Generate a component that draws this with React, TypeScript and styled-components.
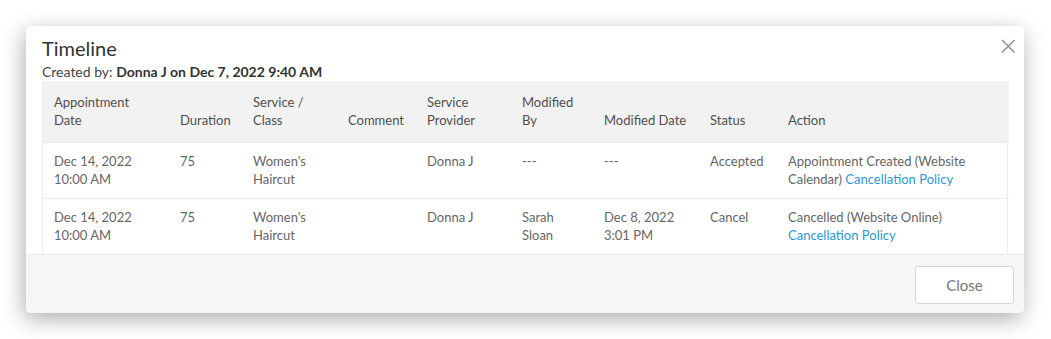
import styled, { createGlobalStyle } from "styled-components";

const GlobalStyle = createGlobalStyle`
  body {
    margin: 0;
    background: #ffffff;
    font-family: Lato, "Open Sans", Arial, sans-serif;
  }
`;

const StyledPage = styled.div`
  padding: 26px 27px 26px 26px;
`;

const StyledModal = styled.div`
  position: relative;
  width: 998px;
  background: #ffffff;
  border-radius: 5px;
  box-shadow: -2px 6px 22px rgba(0, 0, 0, 0.32);
  overflow: hidden;
`;

const StyledHeader = styled.div`
  padding: 10px 16px 0 16px;
`;

const StyledTitle = styled.h4`
  margin: 0;
  font-size: 20px;
  line-height: 24px;
  font-weight: 400;
  color: #333333;
`;

const StyledCreated = styled.div`
  font-size: 14px;
  line-height: 18px;
  color: #444444;
  margin-top: 3px;

  b {
    font-weight: 700;
    color: #333333;
  }
`;

const StyledCloseX = styled.button`
  position: absolute;
  top: 12px;
  right: 8px;
  width: 16px;
  height: 16px;
  padding: 0;
  border: none;
  background: transparent;
  cursor: pointer;
`;

const StyledTableWrap = styled.div`
  margin: 0 16px;
  border-left: 1px solid #ececec;
  border-right: 1px solid #ececec;
`;

const StyledTable = styled.table`
  width: 100%;
  border-collapse: collapse;
  table-layout: fixed;
  font-size: 13px;
  line-height: 18px;
`;

const StyledTh = styled.th`
  text-align: left;
  vertical-align: bottom;
  font-weight: 400;
  color: #4f4f4f;
  background: #f2f2f2;
  padding: 12px 10px 13px 11px;
`;

const StyledTd = styled.td`
  vertical-align: top;
  color: #666666;
  padding: 9px 10px 10px 11px;
  border-top: 1px solid #ececec;
`;

const StyledLink = styled.a`
  color: #2d97d6;
  text-decoration: none;
  cursor: pointer;
`;

const StyledFooter = styled.div`
  display: flex;
  justify-content: flex-end;
  background: #f6f6f6;
  border-top: 1px solid #ececec;
  padding: 11px 10px 9px 16px;
`;

const StyledButton = styled.button`
  width: 99px;
  height: 38px;
  background: #ffffff;
  border: 1px solid #d6d6d6;
  border-radius: 3px;
  font-family: inherit;
  font-size: 15px;
  color: #777777;
  cursor: pointer;
`;

const columns = [
  { label: "Appointment Date", width: 126 },
  { label: "Duration", width: 73 },
  { label: "Service / Class", width: 95 },
  { label: "Comment", width: 79 },
  { label: "Service Provider", width: 95 },
  { label: "Modified By", width: 82 },
  { label: "Modified Date", width: 106 },
  { label: "Status", width: 78 },
  { label: "Action", width: 232 },
];

const rows = [
  {
    date: "Dec 14, 2022 10:00 AM",
    duration: "75",
    service: "Women's Haircut",
    comment: "",
    provider: "Donna J",
    modifiedBy: "---",
    modifiedDate: "---",
    status: "Accepted",
    action: "Appointment Created (Website Calendar)",
  },
  {
    date: "Dec 14, 2022 10:00 AM",
    duration: "75",
    service: "Women's Haircut",
    comment: "",
    provider: "Donna J",
    modifiedBy: "Sarah Sloan",
    modifiedDate: "Dec 8, 2022 3:01 PM",
    status: "Cancel",
    action: "Cancelled (Website Online)",
  },
];

const App = () => {
  return (
    <StyledPage>
      <GlobalStyle />
      <StyledModal>
        <StyledCloseX aria-label="Close">
          <svg width="16" height="16" viewBox="0 0 16 16">
            <path
              d="M2 2 L14.5 14.5 M14.5 2 L2 14.5"
              stroke="#8a8a8a"
              strokeWidth="1.4"
              fill="none"
            />
          </svg>
        </StyledCloseX>
        <StyledHeader>
          <StyledTitle>Timeline</StyledTitle>
          <StyledCreated>
            Created by: <b>Donna J on Dec 7, 2022 9:40 AM</b>
          </StyledCreated>
        </StyledHeader>
        <StyledTableWrap>
          <StyledTable>
            <colgroup>
              {columns.map((c) => (
                <col key={c.label} style={{ width: c.width }} />
              ))}
            </colgroup>
            <thead>
              <tr>
                {columns.map((c) => (
                  <StyledTh key={c.label}>{c.label}</StyledTh>
                ))}
              </tr>
            </thead>
            <tbody>
              {rows.map((r, i) => (
                <tr key={i}>
                  <StyledTd>{r.date}</StyledTd>
                  <StyledTd>{r.duration}</StyledTd>
                  <StyledTd>{r.service}</StyledTd>
                  <StyledTd>{r.comment}</StyledTd>
                  <StyledTd>{r.provider}</StyledTd>
                  <StyledTd>{r.modifiedBy}</StyledTd>
                  <StyledTd>{r.modifiedDate}</StyledTd>
                  <StyledTd>{r.status}</StyledTd>
                  <StyledTd>
                    {r.action} <StyledLink>Cancellation Policy</StyledLink>
                  </StyledTd>
                </tr>
              ))}
            </tbody>
          </StyledTable>
        </StyledTableWrap>
        <StyledFooter>
          <StyledButton>Close</StyledButton>
        </StyledFooter>
      </StyledModal>
    </StyledPage>
  );
};

export default App;
